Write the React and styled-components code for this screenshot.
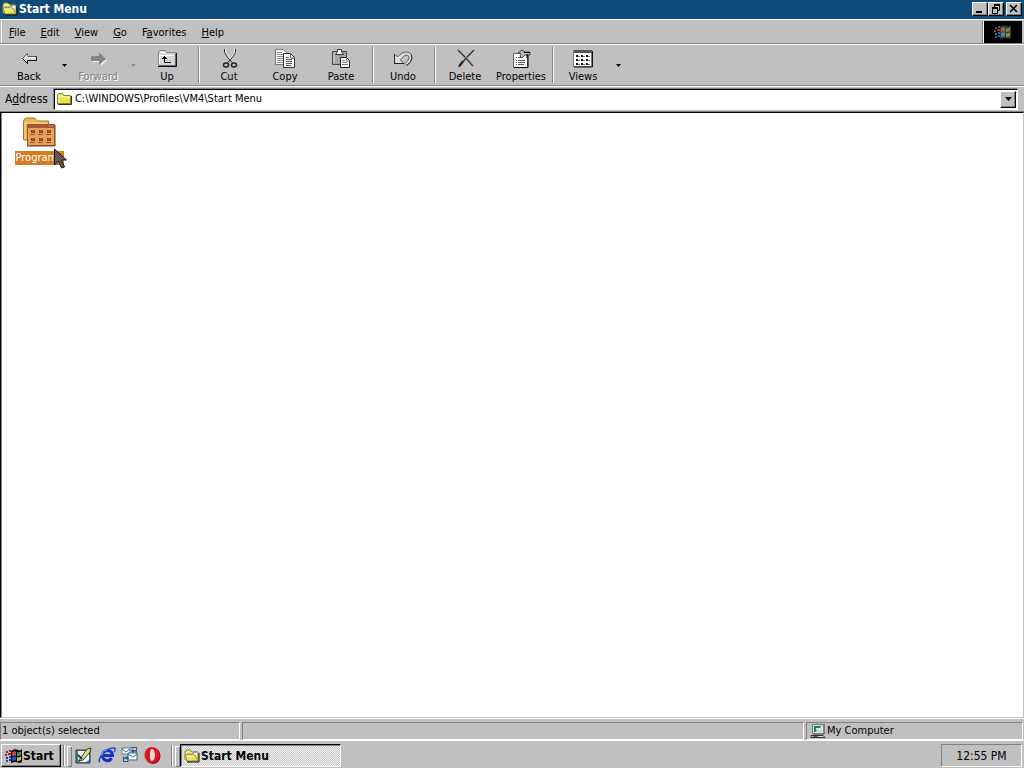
import React from "react";
import styled, { createGlobalStyle } from "styled-components";

const Global = createGlobalStyle`
  * { box-sizing: border-box; }
  body { margin: 0; background: #c0c0c0; }
  button, input { font: inherit; color: inherit; border-radius: 0; margin: 0; }
  svg { display: block; flex: none; }
`;

const Screen = styled.div`
  min-height: 100vh;
  display: flex;
  flex-direction: column;
  background: #c0c0c0;
  color: #000;
  font: 11px/14px Tahoma, "DejaVu Sans Condensed", "Noto Sans", sans-serif;
  white-space: nowrap;
`;

const TitleBar = styled.header`
  height: 19px;
  display: flex;
  align-items: center;
  padding: 0 2px 2px;
  background: #104a78;
  color: #fff;
`;

const Title = styled.h1`
  flex: 1;
  margin: 0 0 0 1px;
  font-size: 12px;
  line-height: 16px;
  font-weight: bold;
`;

const WindowButton = styled.button`
  width: 16px;
  height: 14px;
  padding: 0;
  display: grid;
  place-items: center;
  background: #c0c0c0;
  border: 1px solid;
  border-color: #fff #000 #000 #fff;
  box-shadow: inset -1px -1px #808080;
  margin-left: ${(p) => (p.$apart ? "2px" : "0")};
`;

const MenuRow = styled.nav`
  height: 25px;
  display: flex;
  align-items: stretch;
  border-top: 1px solid #fff;
  border-bottom: 1px solid #808080;
  padding: 1px 2px 0 1px;
`;

const Menus = styled.div`
  flex: 1;
  display: flex;
  align-items: center;
  border-left: 1px solid #fff;
  border-right: 1px solid #808080;
`;

const MenuButton = styled.button`
  border: 0;
  background: none;
  padding: 1px 8px 0 7px;
  height: 20px;
`;

const Brand = styled.div`
  width: 39px;
  display: grid;
  place-items: center;
  background: #000;
  border-left: 1px solid #fff;
`;

const ToolBar = styled.div`
  height: 42px;
  display: flex;
  align-items: stretch;
  border-top: 1px solid #fff;
  border-bottom: 1px solid #808080;
  padding-left: 1px;
`;

const ToolButton = styled.button`
  width: 56px;
  padding: 4px 0 0;
  border: 0;
  background: none;
  display: flex;
  flex-direction: column;
  align-items: center;
  gap: 1px;
  color: ${(p) => (p.disabled ? "#808080" : "#000")};
  text-shadow: ${(p) => (p.disabled ? "1px 1px #fff" : "none")};
`;

const DropButton = styled.button`
  width: 13px;
  padding: 0 0 0 1px;
  border: 0;
  background: none;
  display: grid;
  place-items: center;
  color: ${(p) => (p.disabled ? "#909090" : "#000")};
`;

const Divider = styled.span`
  width: 2px;
  margin: 2px 1px 2px 3px;
  border-left: 1px solid #808080;
  border-right: 1px solid #fff;
`;

const AddressRow = styled.div`
  height: 26px;
  display: flex;
  align-items: center;
  gap: 6px;
  padding: 0 6px 0 5px;
  border-top: 1px solid #fff;
  border-bottom: 1px solid #808080;
`;

const AddressLabel = styled.label`
  font-size: 12px;
`;

const AddressBox = styled.div`
  flex: 1;
  height: 21px;
  display: flex;
  align-items: center;
  gap: 3px;
  padding: 1px;
  background: #fff;
  border: 1px solid;
  border-color: #000 #fff #fff #000;
  box-shadow: -1px -1px #808080;
`;

const AddressInput = styled.input`
  flex: 1;
  min-width: 0;
  border: 0;
  padding: 0;
  background: none;
  outline: none;
`;

const ComboButton = styled(WindowButton)`
  height: 17px;
`;

const Folder = styled.main`
  flex: 1;
  display: flex;
  align-items: flex-start;
  padding: 3px 0 0 10px;
  background: #fff;
  border: 1px solid;
  border-color: #000 #c0c0c0 #c0c0c0 #000;
  box-shadow: inset 1px 0 #808080;
`;

const FolderItem = styled.button`
  position: relative;
  width: 56px;
  padding: 0;
  border: 0;
  background: none;
  display: flex;
  flex-direction: column;
  align-items: center;
  gap: 3px;
`;

const ItemLabel = styled.span`
  width: 49px;
  overflow: hidden;
  padding: 0 1px;
  background: #d37c22;
  color: #fff;
  text-align: left;
`;

const Pointer = styled.svg`
  position: absolute;
  left: 43px;
  top: 32px;
`;

const StatusBar = styled.footer`
  height: 22px;
  display: grid;
  grid-template-columns: 240px 1fr 217px;
  gap: 2px;
  padding: 3px 1px 0 0;
  border-top: 1px solid #fff;
`;

const StatusPane = styled.div`
  display: flex;
  align-items: center;
  gap: 1px;
  padding-left: ${(p) => (p.$icon ? "3px" : "1px")};
  border: 1px solid;
  border-color: #808080 #fff #fff #808080;
`;

const TaskBar = styled.div`
  height: 28px;
  display: flex;
  align-items: center;
  padding: 1px 2px 0 1px;
  border-top: 1px solid #fff;
`;

const StartButton = styled.button`
  width: 60px;
  height: 23px;
  display: flex;
  align-items: center;
  padding: 1px 3px 0;
  font-weight: bold;
  font-size: 12px;
  background: #c0c0c0;
  border: 1px solid;
  border-color: #fff #000 #000 #fff;
  box-shadow: inset -1px -1px #808080;
`;

const Grip = styled.span`
  width: 8px;
  height: 21px;
  margin-left: 2px;
  border-left: 1px solid #808080;
  box-shadow: inset 1px 0 #fff;

  &::after {
    content: "";
    display: block;
    width: 3px;
    height: 19px;
    margin: 1px 0 0 3px;
    border: 1px solid;
    border-color: #fff #808080 #808080 #fff;
  }
`;

const QuickLaunch = styled.div`
  display: flex;
  width: 98px;
  padding-left: 1px;
`;

const QuickButton = styled.button`
  width: 23px;
  height: 22px;
  padding: 0;
  border: 0;
  background: none;
  display: grid;
  place-items: center;
`;

const TaskButton = styled.button`
  width: 161px;
  height: 23px;
  display: flex;
  align-items: center;
  gap: 1px;
  margin-left: 1px;
  padding: 2px 3px 0;
  font-weight: bold;
  font-size: 12px;
  border: 1px solid;
  border-color: #000 #fff #fff #000;
  box-shadow: inset 1px 1px #808080;
  background: repeating-conic-gradient(#c8c8c8 0 25%, #f4f4f4 0 50%) 0 0 / 2px 2px;
`;

const Clock = styled.time`
  width: 81px;
  height: 23px;
  margin-left: auto;
  padding-top: 2px;
  display: grid;
  place-items: center;
  font-size: 12px;
  border: 1px solid;
  border-color: #808080 #fff #fff #808080;
`;

const Icon = ({ size = 16, h, children, ...rest }) => (
  <svg width={size} height={h || size} viewBox={`0 0 ${size} ${h || size}`} fill="none" aria-hidden="true" {...rest}>
    {children}
  </svg>
);

const OpenFolder = () => (
  <Icon>
    <path d="M1 12V4l1-2h4l2 2h5v3" fill="#f2ee85" stroke="#8b8a20" />
    <path d="M3 13V6h6l1-2h4v9z" fill="#fffbd0" stroke="#777" />
    <path d="M1 7h10l3 6H3z" fill="#e2e85a" stroke="#8f8f30" />
    <path d="M3 14h12V5" stroke="#111" />
    <path d="M2 8h8" stroke="#fffcc0" />
  </Icon>
);

const ClosedFolder = () => (
  <Icon>
    <path d="M1.500 12.500V3.500l1-1h4l1 2h7v8z" fill="#dfe657" stroke="#87862a" />
    <path d="M3 12V5h4l1 1h6" stroke="#fff9a5" />
    <path d="M2 13.500h13.500V5" stroke="#333" />
  </Icon>
);

const Triangle = ({ w = 5 }) => (
  <Icon size={w} h={w === 5 ? 3 : 4}>
    <path d={w === 5 ? "M0 0h5L2.500 3z" : "M0 0h7L3.500 4z"} fill="currentColor" />
  </Icon>
);

const toolIcons = {
  Back: (
    <Icon size={20}>
      <path d="M3.500 9.500l5-5v3h9v4h-9v3z" fill="#d8d8d8" stroke="#555" />
      <path d="M3.500 9.500l5 5v-3h9v-4" stroke="#111" />
      <path d="M5 9.500l3-3v2h8" stroke="#fff" />
    </Icon>
  ),
  Forward: (
    <Icon size={20}>
      <path d="M4 9h8V5l7 6-6 6v-4H4z" fill="#eee" />
      <path d="M3 7h8V3.500L18 10l-7 6v-4H3z" fill="#858585" />
    </Icon>
  ),
  Up: (
    <Icon size={20}>
      <path d="M1.500 16.500v-13l1-2h6l1 2h9v13z" fill="#d4d4d4" stroke="#808080" />
      <path d="M2.500 15V6.500H17M3 3.500h5" stroke="#fff" />
      <path d="M1 17.500h18.500V4" stroke="#111" />
      <path d="M2 16.500h16.500V5" stroke="#666" />
      <path d="M7.500 7v6.500H14M5 9.500h5M6 8.500h3" stroke="#000" />
    </Icon>
  ),
  Cut: (
    <Icon size={20} transform="translate(1 0)">
      <path d="M4.500 0v3l2 4 6 7M15.500 0v3l-2 4-6 7" stroke="#333" />
      <path d="M5.500 0v3l5 7M14.500 0v3l-3 5" stroke="#eee" />
      <ellipse cx="6" cy="16" rx="2.500" ry="2" stroke="#222" strokeWidth="1.500" />
      <ellipse cx="14" cy="16" rx="2.500" ry="2" stroke="#222" strokeWidth="1.500" />
    </Icon>
  ),
  Copy: (
    <Icon size={20}>
      <path d="M.500.500h8l3 3v12h-11z" fill="#fff" stroke="#777" />
      <path d="M2 3.500h5M2 5.500h7M2 7.500h6M2 9.500h6M2 11.500h6M2 13.500h6" stroke="#888" />
      <path d="M8.500 4.500h7l4 4v10h-11z" fill="#fff" stroke="#333" />
      <path d="M15.500 5v4h4M11 8.500h3M11 10.500h6M11 12.500h6M11 14.500h6M11 16.500h5" stroke="#555" />
    </Icon>
  ),
  Paste: (
    <Icon size={20}>
      <path d="M1.500 2.500h14v13h-14z" fill="#a4a4a4" stroke="#444" />
      <path d="M3 4h2M3 14V5" stroke="#ddd" />
      <path d="M4.500 5.500l2-3v-2h4v2l2 3z" fill="#f4f4f4" stroke="#333" />
      <path d="M9.500 8.500h6l3 3v7h-9z" fill="#fff" stroke="#222" />
      <path d="M15.500 9v3h3M11 11.500h3M11 13.500h5M11 15.500h6" stroke="#777" />
    </Icon>
  ),
  Undo: (
    <Icon size={20}>
      <path d="M1.500 5v9.500H11l-3.500-3.500c3-4.500 6-6 8-4 1.500 2.500-1 5-3.500 7.500l2 2c4-3.500 6-7.500 4-11C15 1 9 3 4.500 8z" fill="#ddd" stroke="#555" />
      <path d="M1.500 5v9.500H11M14 16.500c4-3.500 6-7.500 4-11" stroke="#222" />
    </Icon>
  ),
  Delete: (
    <Icon size={20} transform="translate(1 0)">
      <path d="M2 1l6 6 9 10M18 1l-8 8-7 9" stroke="#333" strokeWidth="1.500" />
      <path d="M3 1l6 6 8 9M17 1L9 9" stroke="#888" />
      <path d="M3 17l4-5" stroke="#222" strokeWidth="2" />
    </Icon>
  ),
  Properties: (
    <Icon size={20}>
      <path d="M2.500 4.500h14v14h-14z" fill="#fff" stroke="#666" />
      <path d="M3 18.500h14V6" stroke="#000" />
      <path d="M5 8.500h1M7 8.500h3M5 11.500h1M7 11.500h7M5 13.500h1M7 13.500h7M5 15.500h1M7 15.500h6" stroke="#555" />
      <path d="M7 4l4-3 3 2h5v3h-5l-3 3-2-2 1-2z" fill="#bbb" stroke="#444" />
      <path d="M13 3.500h6M16 5v4" stroke="#000" />
    </Icon>
  ),
  Views: (
    <Icon size={20}>
      <path d="M.500 1.500h18v16H.500z" fill="#fff" stroke="#777" />
      <path d="M1 2.500h18" stroke="#555" strokeWidth="3" />
      <path d="M1 18h18.500V2" stroke="#111" />
      {[6, 10, 14].map((y) =>
        [3, 8, 13].map((x) => (
          <g key={`${x}-${y}`}>
            <path d={`M${x} ${y}h2v2h-2z`} fill="#111" />
            <path d={`M${x + 2} ${y + 1.5}h2`} stroke="#777" />
          </g>
        ))
      )}
    </Icon>
  ),
};

const ProgramsIcon = () => (
  <Icon size={34} h={32}>
    <path d="M1.500 24V5l2-3h9l3 3h11v19z" fill="#e5b45d" stroke="#a8722d" />
    <path d="M3 23V7h22" stroke="#f2c670" strokeWidth="2" />
    <path d="M5.500 8.500h27v21h-27z" fill="#e7a456" stroke="#9b562b" />
    <path d="M6 10.500h26" stroke="#a85538" strokeWidth="3" />
    <path d="M27 10h1M30 10h1" stroke="#f6c48a" />
    <path d="M5 30h28V9" stroke="#734027" />
    {[14, 22].map((y) =>
      [9, 17, 25].map((x) => (
        <g key={`${x}-${y}`}>
          <path d={`M${x} ${y}h4v3h-4z`} fill="#773e32" />
          <path d={`M${x + 1} ${y + 1}h2`} stroke="#d77445" />
          <path d={`M${x - 1} ${y + 4.5}h5`} stroke="#8f5030" />
        </g>
      ))
    )}
  </Icon>
);

const WindowsFlag = ({ dark }) => (
  <Icon size={18} h={16}>
    <path d="M6 3c3-2 5-2 7-1s3 0 4-1v13c-3 2-4 0-6 0s-3 0-5 1z" fill={dark ? "#343d29" : "#000"} />
    <path d="M7 4c2-1 3-1 4 0v4c-2-1-3 0-4 0z" fill={dark ? "#a45b55" : "#c74150"} />
    <path d="M12 4c2 1 3 0 4-1v4c-2 1-3 1-4 1z" fill={dark ? "#688e4d" : "#3c9c62"} />
    <path d="M7 9c2-1 3-1 4 0v4c-2-1-3 0-4 0z" fill={dark ? "#4d86a4" : "#3351bb"} />
    <path d="M12 9c2 1 3 0 4-1v4c-2 1-3 1-4 1z" fill={dark ? "#8f8a48" : "#d0c83e"} />
    <path d="M1 4h2M4 3h2M0 7h2M3 6h3" stroke={dark ? "#7a4a52" : "#a12348"} strokeWidth="2" />
    <path d="M1 10h2M4 9h2M1 13h2M4 12h2" stroke={dark ? "#3c6a88" : "#3a2f90"} strokeWidth="2" />
  </Icon>
);

const ComputerIcon = () => (
  <Icon size={16}>
    <path d="M2.500 1.500h11v9h-11z" fill="#d8dfda" stroke="#777" />
    <path d="M4 3h8v6H4z" fill="#167c7b" />
    <path d="M6 5h4v2H6z" fill="#b9eee5" />
    <path d="M14 1v10H3M1 12.500h12l2 2H1z" stroke="#333" fill="#ddd" />
    <path d="M3 13.500h5" stroke="#208a70" />
  </Icon>
);

const quickItems = [
  ["Show Desktop", (
    <Icon key="d" size={17}>
      <path d="M1 3h14v13H1z" fill="#3f7fa0" stroke="#263e49" />
      <path d="M3 4h9l2 3v6l-3 2H5l-2-3z" fill="#f2fbf6" />
      <path d="M5 12l7-10 4-1-1 4-7 8-4 1z" fill="#e3dd8c" stroke="#333" />
      <path d="M3 8l4 4" stroke="#333" strokeWidth="2" />
    </Icon>
  )],
  ["Internet Explorer", (
    <Icon key="e" size={18}>
      <path d="M13.500 12c-1 2-3 3-5 2.500-6-1-5-10 1-10 3 0 5 2 5 5H6" stroke="#172fc7" strokeWidth="3" />
      <path d="M2 16c-4-2 7-15 14-14 2 0 1 3 0 4" stroke="#2546c8" strokeWidth="1.500" />
      <path d="M4 9c0-3 2-5 5-5" stroke="#65c5ed" />
    </Icon>
  )],
  ["Outlook Express", (
    <Icon key="o" size={18}>
      <path d="M1 2h8v6H1z" fill="#fff" stroke="#678" />
      <path d="M1 3l4 3 4-3" stroke="#468" />
      <path d="M7 7h9v7H7z" fill="#fcffff" stroke="#346985" />
      <path d="M7 8l5 3 4-3" stroke="#368" />
      <path d="M9 1h7v6l-2-2-2 2-2-2 2-2zM8 16H2v-6l2 2 2-2 2 2-2 2z" fill="#2450b8" />
      <path d="M12 2h3v2h-3zM3 13h3v2H3z" fill="#e2d845" />
    </Icon>
  )],
  ["Opera", (
    <Icon key="p" size={17}>
      <ellipse cx="9" cy="9" rx="7.500" ry="8" fill="#8d1118" />
      <ellipse cx="8" cy="8" rx="7.500" ry="8" fill="#df151e" />
      <ellipse cx="8" cy="8" rx="3" ry="6" fill="#e4d8d5" />
      <path d="M6 3c-1 3-1 7 0 10" stroke="#9e1118" />
    </Icon>
  )],
];

const menus = [["", "F", "ile"], ["", "E", "dit"], ["", "V", "iew"], ["", "G", "o"], ["F", "a", "vorites"], ["", "H", "elp"]];

const tools = [
  { name: "Back", drop: true },
  { name: "Forward", drop: true, disabled: true },
  { name: "Up", end: true },
  { name: "Cut" },
  { name: "Copy" },
  { name: "Paste", end: true },
  { name: "Undo", end: true },
  { name: "Delete" },
  { name: "Properties", end: true },
  { name: "Views", drop: true },
];

export default function App() {
  return (
    <>
      <Global />
      <Screen>
        <TitleBar>
          <OpenFolder />
          <Title>Start Menu</Title>
          <WindowButton aria-label="Minimize">
            <Icon size={10}><path d="M1 8h6" stroke="#000" strokeWidth="2" /></Icon>
          </WindowButton>
          <WindowButton aria-label="Restore">
            <Icon size={10}>
              <path d="M3 1h6M1 4h6" stroke="#000" strokeWidth="2" />
              <path d="M3.500 1v2M8.500 1v5.500H7M1.500 4v5.500h5V4" stroke="#000" />
            </Icon>
          </WindowButton>
          <WindowButton aria-label="Close" $apart>
            <Icon size={10}><path d="M1 1l7 7M8 1L1 8" stroke="#000" strokeWidth="1.600" /></Icon>
          </WindowButton>
        </TitleBar>

        <MenuRow>
          <Menus>
            {menus.map(([before, key, after]) => (
              <MenuButton key={before + key + after}>{before}<u>{key}</u>{after}</MenuButton>
            ))}
          </Menus>
          <Brand><WindowsFlag dark /></Brand>
        </MenuRow>

        <ToolBar>
          {tools.map(({ name, drop, disabled, end }) => (
            <React.Fragment key={name}>
              <ToolButton disabled={disabled}>{toolIcons[name]}{name}</ToolButton>
              {drop && <DropButton aria-label={`${name} list`} disabled={disabled}><Triangle /></DropButton>}
              {end && <Divider />}
            </React.Fragment>
          ))}
        </ToolBar>

        <AddressRow>
          <AddressLabel htmlFor="address">A<u>d</u>dress</AddressLabel>
          <AddressBox>
            <ClosedFolder />
            <AddressInput id="address" defaultValue="C:\WINDOWS\Profiles\VM4\Start Menu" />
            <ComboButton aria-label="Address list"><Triangle w={7} /></ComboButton>
          </AddressBox>
        </AddressRow>

        <Folder>
          <FolderItem>
            <ProgramsIcon />
            <ItemLabel>Programs</ItemLabel>
            <Pointer width="13" height="22" viewBox="0 0 13 22" aria-hidden="true">
              <path d="M.500 1v16l4-4 3 7 3-1-3-7h5z" fill="#625760" stroke="#191419" />
            </Pointer>
          </FolderItem>
        </Folder>

        <StatusBar>
          <StatusPane>1 object(s) selected</StatusPane>
          <StatusPane />
          <StatusPane $icon><ComputerIcon />My Computer</StatusPane>
        </StatusBar>

        <TaskBar>
          <StartButton><WindowsFlag />Start</StartButton>
          <Grip />
          <QuickLaunch>
            {quickItems.map(([name, icon]) => <QuickButton key={name} aria-label={name}>{icon}</QuickButton>)}
          </QuickLaunch>
          <Grip />
          <TaskButton><OpenFolder />Start Menu</TaskButton>
          <Clock>12:55 PM</Clock>
        </TaskBar>
      </Screen>
    </>
  );
}
